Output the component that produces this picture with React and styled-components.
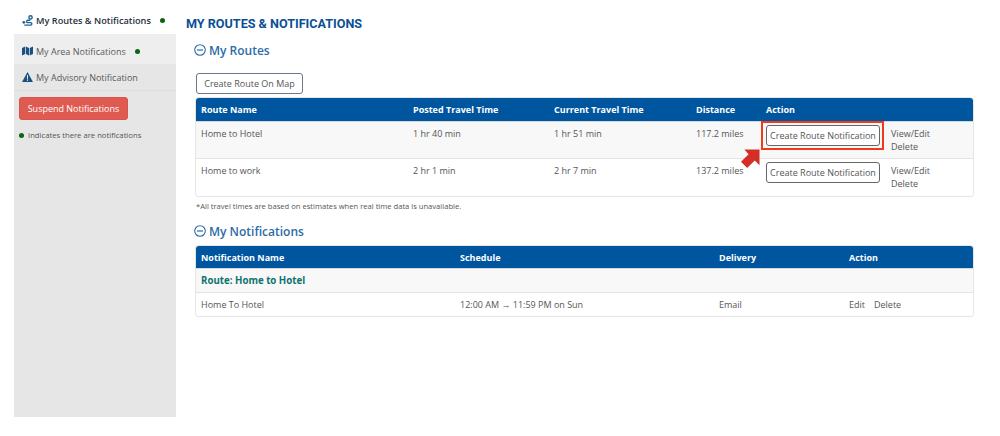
import React from "react";
import styled, { createGlobalStyle } from "styled-components";

const BLUE = "#00559f";

const routes = [
  { name: "Home to Hotel", posted: "1 hr 40 min", current: "1 hr 51 min", distance: "117.2 miles", highlight: true },
  { name: "Home to work", posted: "2 hr 1 min", current: "2 hr 7 min", distance: "137.2 miles" },
];

function App() {
  return (
    <>
      <GlobalStyle />
      <Page>
        <Sidebar>
          <NavItem $active>
            <RouteIcon />
            My Routes &amp; Notifications
            <Dot $gap={9} />
          </NavItem>
          <NavItem $area>
            <MapIcon />
            My Area Notifications
            <Dot $gap={9} />
          </NavItem>
          <NavItem $advisory>
            <WarnIcon />
            My Advisory Notification
          </NavItem>
          <SuspendButton>Suspend Notifications</SuspendButton>
          <Legend>
            <Dot $gap={0} />
            Indicates there are notifications
          </Legend>
        </Sidebar>
        <Content>
          <PageTitle>MY ROUTES &amp; NOTIFICATIONS</PageTitle>
          <Section>
            <SectionTitle>
              <MinusIcon />
              My Routes
            </SectionTitle>
            <MapButton>Create Route On Map</MapButton>
            <Panel>
              <RouteRow $head>
                <span>Route Name</span>
                <span>Posted Travel Time</span>
                <span>Current Travel Time</span>
                <span>Distance</span>
                <span>Action</span>
              </RouteRow>
              {routes.map((route) => (
                <RouteRow key={route.name} $shade={route.highlight}>
                  <span>{route.name}</span>
                  <span>{route.posted}</span>
                  <span>{route.current}</span>
                  <span>{route.distance}</span>
                  <ActionCell>
                    <CreateButton>Create Route Notification</CreateButton>
                    {route.highlight && (
                      <>
                        <Highlight />
                        <Arrow />
                      </>
                    )}
                    <Links>
                      <span>View/Edit</span>
                      <span>Delete</span>
                    </Links>
                  </ActionCell>
                </RouteRow>
              ))}
            </Panel>
            <Footnote>*All travel times are based on estimates when real time data is unavailable.</Footnote>
          </Section>
          <Section $second>
            <SectionTitle $second>
              <MinusIcon />
              My Notifications
            </SectionTitle>
            <Panel>
              <NotifyRow $head>
                <span>Notification Name</span>
                <span>Schedule</span>
                <span>Delivery</span>
                <span>Action</span>
              </NotifyRow>
              <GroupRow>Route: Home to Hotel</GroupRow>
              <NotifyRow>
                <span>Home To Hotel</span>
                <span>12:00 AM → 11:59 PM on Sun</span>
                <span>Email</span>
                <InlineLinks>
                  <span>Edit</span>
                  <span>Delete</span>
                </InlineLinks>
              </NotifyRow>
            </Panel>
          </Section>
        </Content>
      </Page>
    </>
  );
}

export default App;

const RouteIcon = () => (
  <NavSvg viewBox="0 0 12 12" width="11" height="11">
    <circle cx="9.3" cy="2.6" r="1.8" fill="none" stroke="#1d5f94" strokeWidth="1.5" />
    <circle cx="2" cy="8" r="1.5" fill="#1d5f94" />
    <path d="M9 5.7H6.4a1.3 1.3 0 0 0 0 2.6h3a1.3 1.3 0 0 1 0 2.7H2.5" fill="none" stroke="#1d5f94" strokeWidth="1.5" />
  </NavSvg>
);

const MapIcon = () => (
  <NavSvg viewBox="0 0 12 10" width="11" height="10">
    <path d="M0 1.6 3.4.2v8.2L0 9.8zM4.2.2l3.4 1.4v8.2L4.2 8.4zM8.4 1.6 12 .2v8.2L8.4 9.8z" fill="#1d4f80" />
  </NavSvg>
);

const WarnIcon = () => (
  <NavSvg viewBox="0 0 12 11" width="11" height="10">
    <path d="M6 0 12 11H0z" fill="#1d4f80" />
    <path d="M5.4 3.6h1.2l-.2 4h-.8zM5.4 8.3h1.2v1.2H5.4z" fill="#fff" />
  </NavSvg>
);

const MinusIcon = () => (
  <TitleSvg viewBox="0 0 12 12" width="12" height="12">
    <circle cx="6" cy="6" r="5.3" fill="none" stroke="#2c6ca6" strokeWidth="1.1" />
    <path d="M3 6h6" stroke="#2c6ca6" strokeWidth="1.2" />
  </TitleSvg>
);

const Arrow = () => (
  <ArrowSvg viewBox="0 0 20 20" width="19" height="19">
    <path d="M19.5.5V17l-5-5L6.500 20 0 13.500 8 5.500 3.500.5z" fill="#d32f27" />
  </ArrowSvg>
);

const GlobalStyle = createGlobalStyle`
  html, body {
    margin: 0;
    padding: 0;
    background: #fff;
  }
  body {
    font-family: "Open Sans", "Liberation Sans", sans-serif;
    font-size: 9px;
    color: #555;
  }
`;

const Page = styled.div`
  display: flex;
  width: 1000px;
  height: 436px;
  padding-left: 14px;
  box-sizing: border-box;
`;

const Sidebar = styled.aside`
  width: 162px;
  height: 417px;
  background: #e6e6e6;
  display: flex;
  flex-direction: column;
  flex-shrink: 0;
`;

const NavItem = styled.div`
  display: flex;
  align-items: center;
  box-sizing: border-box;
  font-size: ${(p) => (p.$active ? 9.2 : 9)}px;
  white-space: nowrap;
  padding-left: 8px;
  padding-top: ${(p) => (p.$active ? 7 : p.$area ? 4 : 0)}px;
  height: ${(p) => (p.$active ? 34 : p.$area ? 30 : 27)}px;
  background: ${(p) => (p.$active ? "#fff" : p.$area ? "#eeeeee" : "#e6e6e6")};
  color: ${(p) => (p.$active ? "#1e2f3d" : "#5a5a5a")};
  font-weight: ${(p) => (p.$active ? 600 : 400)};
  border-bottom: ${(p) => (p.$advisory ? "1px solid #dddddd" : "none")};
`;

const NavSvg = styled.svg`
  margin-right: 3px;
  flex-shrink: 0;
`;

const Dot = styled.i`
  display: inline-block;
  width: 5px;
  height: 5px;
  border-radius: 50%;
  background: #0b6313;
  margin-left: ${(p) => p.$gap}px;
  margin-right: ${(p) => (p.$gap ? 0 : 4)}px;
  flex-shrink: 0;
`;

const SuspendButton = styled.button`
  align-self: flex-start;
  width: 109px;
  height: 23px;
  margin: 6px 0 0 5px;
  padding: 0;
  border: 1px solid #d9534f;
  border-radius: 3px;
  background: #df5a50;
  color: #fff;
  font-family: inherit;
  font-size: 9px;
`;

const Legend = styled.div`
  display: flex;
  align-items: center;
  margin: 10px 0 0 5px;
  font-size: 7.7px;
  color: #555;
`;

const Content = styled.main`
  flex: 1;
  padding-left: 10px;
  padding-right: 27px;
  min-width: 0;
`;

const PageTitle = styled.h1`
  margin: 16px 0 0;
  font-family: Roboto, "Liberation Sans", sans-serif;
  font-size: 12.6px;
  line-height: 15px;
  font-weight: 700;
  color: #0a4f96;
`;

const Section = styled.section`
  padding-left: 10px;
  margin-top: ${(p) => (p.$second ? 12 : 0)}px;
`;

const SectionTitle = styled.h2`
  display: flex;
  align-items: center;
  margin: ${(p) => (p.$second ? "0 0 7px" : "11px 0 15px")};
  height: 16px;
  margin-left: -2px;
  font-size: 12px;
  font-weight: 600;
  color: #2c6ca6;
`;

const TitleSvg = styled.svg`
  margin-right: 3px;
`;

const MapButton = styled.button`
  display: block;
  width: 107px;
  height: 21px;
  margin-bottom: 4px;
  padding: 0;
  border: 1px solid #6b7790;
  border-radius: 3px;
  background: #fff;
  color: #555;
  font-family: inherit;
  font-size: 9px;
`;

const Panel = styled.div`
  border-radius: 3px;
  box-shadow: 0 0 0 1px #e6e6e6;
  overflow: hidden;
`;

const Row = styled.div`
  display: grid;
  box-sizing: border-box;
  align-items: ${(p) => (p.$head ? "center" : "start")};
  padding-left: 5px;
  font-size: 9px;
  white-space: nowrap;
  background: ${(p) => (p.$head ? BLUE : p.$shade ? "#f8f8f8" : "#fff")};
  color: ${(p) => (p.$head ? "#fff" : "#555")};
  font-weight: ${(p) => (p.$head ? 700 : 400)};
  border-bottom: ${(p) => (p.$head ? "1px solid #d4d8dc" : "1px solid #e4e4e4")};
  &:last-child {
    border-bottom: none;
  }
`;

const RouteRow = styled(Row)`
  grid-template-columns: 212px 141px 142px 70px 1fr;
  height: ${(p) => (p.$head ? 24 : 37)}px;
  padding-top: ${(p) => (p.$head ? 0 : 5)}px;
`;

const NotifyRow = styled(Row)`
  grid-template-columns: 259px 259px 130px 1fr;
  align-items: center;
  height: 23px;
`;

const GroupRow = styled.div`
  display: flex;
  align-items: center;
  box-sizing: border-box;
  height: 24px;
  padding-left: 5px;
  background: #f8f8f8;
  border-bottom: 1px solid #e4e4e4;
  font-size: 9.7px;
  font-weight: 700;
  color: #0e7270;
`;

const ActionCell = styled.div`
  position: relative;
  display: flex;
  align-items: flex-start;
`;

const CreateButton = styled.button`
  width: 114px;
  height: 21px;
  padding: 0;
  margin-top: -2px;
  border: 1px solid #666;
  border-radius: 3px;
  background: #fff;
  color: #555;
  font-family: inherit;
  font-size: 9px;
`;

const Highlight = styled.div`
  position: absolute;
  left: -5px;
  top: -6px;
  width: 123px;
  height: 29px;
  border: 2px solid #f03a1d;
  box-sizing: border-box;
  pointer-events: none;
`;

const ArrowSvg = styled.svg`
  position: absolute;
  left: -25px;
  top: 22px;
`;

const Links = styled.div`
  display: flex;
  flex-direction: column;
  margin: 1px 0 0 11px;
  line-height: 12.5px;
`;

const InlineLinks = styled.div`
  display: flex;
  gap: 9px;
`;

const Footnote = styled.p`
  margin: 5px 0 0;
  font-size: 7.6px;
  line-height: 10px;
  color: #555;
`;
